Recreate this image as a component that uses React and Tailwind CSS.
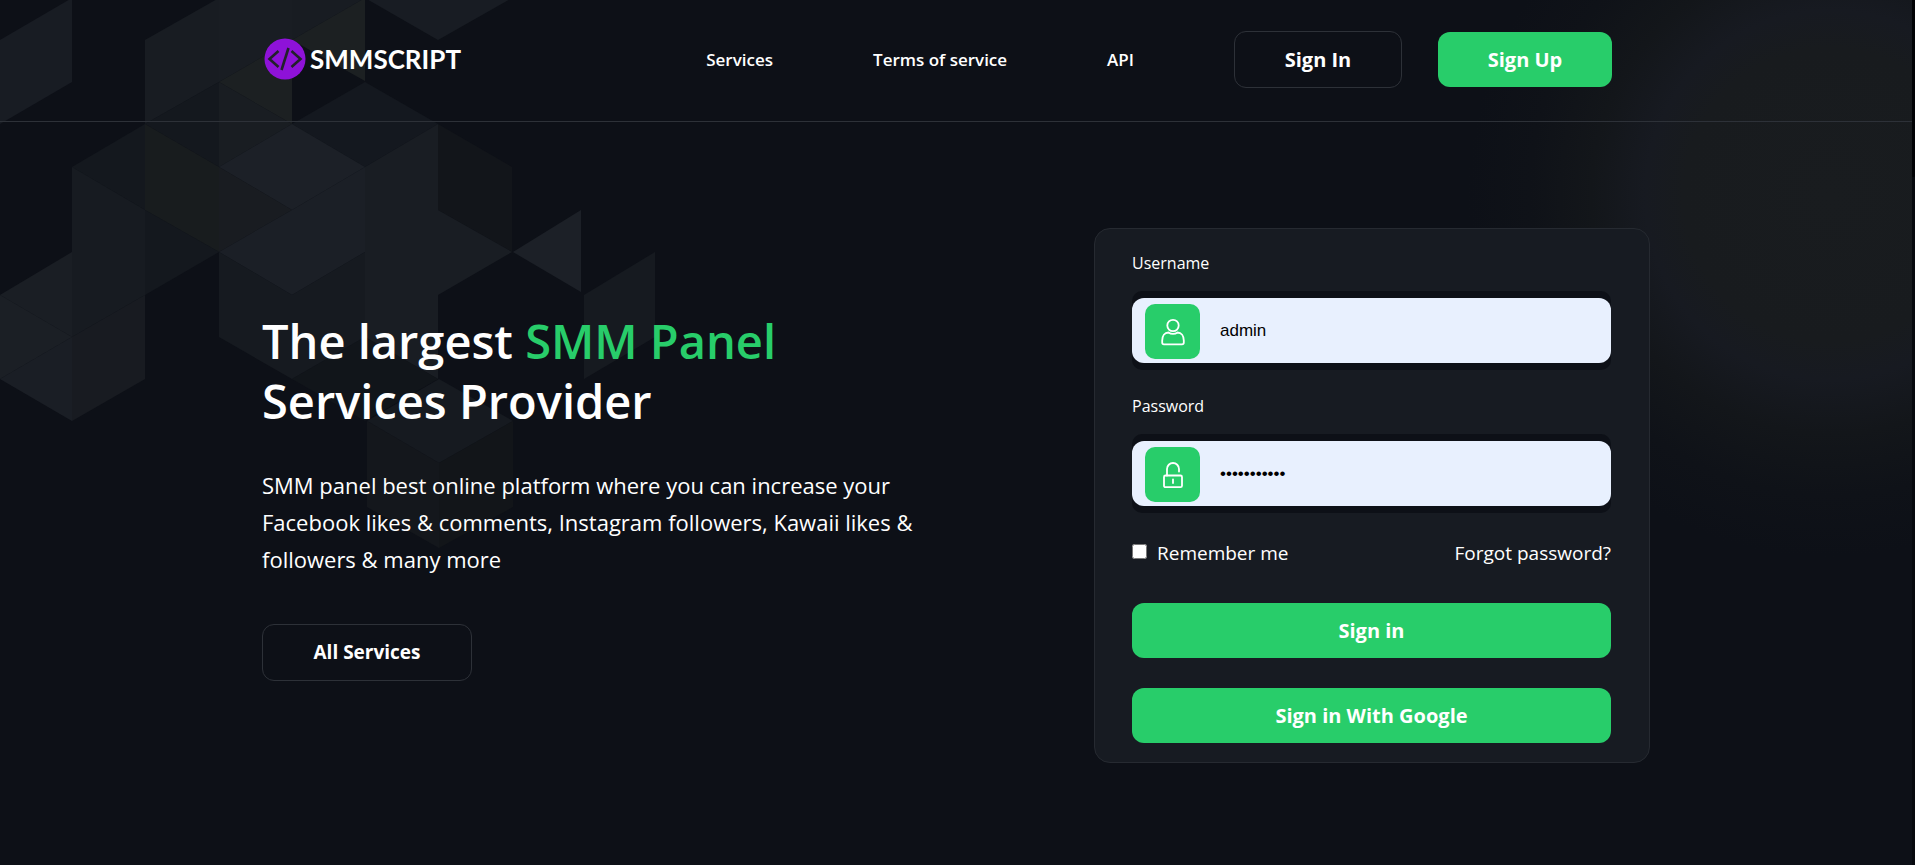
import { useState } from "react";

const CUBES = [
  ["0,40 72,-2 72,82 0,124", "#181c23"],
  ["145,40 219,-2 219,82 145,124", "#181c22"],
  ["219,-2 292,-2 292,40 219,82", "#191d23"],
  ["292,-2 365,-2 292,40", "#181c22"],
  ["292,40 365,-2 365,81", "#1c2022"],
  ["219,82 292,40 292,124", "#1c2022"],
  ["219,82 292,124 219,167", "#191d22"],
  ["219,82 219,167 145,124", "#14181e"],
  ["365,-2 512,-2 438,40", "#181c23"],
  ["292,124 365,82 438,124 365,167", "#14181f"],
  ["438,124 512,167 512,252 438,210", "#12151a"],
  ["365,167 438,124 438,210 512,252 438,295 438,379 365,337", "#191d23"],
  ["292,124 365,167 292,210 219,167", "#1c2027"],
  ["219,167 292,210 219,252", "#191c21"],
  ["145,124 219,167 219,252 145,210", "#181c1e"],
  ["292,210 365,167 365,252 292,295 219,252", "#1b1f26"],
  ["72,167 145,124 145,210", "#14181e"],
  ["72,167 145,210 145,295 72,337", "#171b21"],
  ["145,210 219,252 145,295", "#14181e"],
  ["0,295 72,252 72,337", "#1a1e24"],
  ["0,295 72,337 0,379", "#1b1f25"],
  ["0,379 72,337 72,421", "#1a1e25"],
  ["72,337 145,295 145,379 72,421", "#181b21"],
  ["219,252 292,295 365,252 365,337 292,379 219,337", "#161a20"],
  ["292,379 365,337 438,379 365,421", "#11151a"],
  ["367,421 439,379 513,421 439,463", "#161a20"],
  ["367,421 439,463 439,548 367,507", "#14171c"],
  ["439,463 513,421 513,507 439,548", "#121519"],
  ["513,252 581,210 581,292", "#1c2027"],
  ["584,295 655,252 655,337 584,379", "#161a20"],
];

function Backdrop() {
  return (
    <div aria-hidden="true" className="pointer-events-none absolute inset-0 overflow-hidden">
      <svg width="660" height="560" viewBox="0 0 660 560" className="block">
        {CUBES.map(([points, fill]) => (
          <polygon key={points} points={points} fill={fill} />
        ))}
      </svg>
      <div className="absolute -top-[190px] -right-[300px] h-[770px] w-[770px] rounded-full bg-[radial-gradient(closest-side,#191c1f_0%,#181b1e_38%,#171a21_48%,#13161a_62%,#0f1218_78%,#0d101700_94%)]" />
      <div className="absolute top-0 right-0 h-full w-[3px] bg-[#07090e]">
        <div className="h-[177px] rounded-b-full bg-[#010205]" />
      </div>
    </div>
  );
}

function Logo() {
  return (
    <a href="#" className="flex items-center gap-1 pb-[2px] pl-[2px]" aria-label="SMMSCRIPT">
      <svg width="42" height="42" viewBox="0 0 42 42" fill="none">
        <circle cx="21" cy="21" r="20.5" fill="#8e12d8" />
        <g stroke="#22202a" strokeWidth="2.6">
          <path d="M14.5 13 5.500 21l9 8" />
          <path d="M27.500 13 36.500 21l-9 8" />
          <path d="M24.500 10 17.500 32" />
        </g>
      </svg>
      <span className="font-[Lato,sans-serif] text-[26px] leading-8 font-bold text-white">SMMSCRIPT</span>
    </a>
  );
}

function UserIcon() {
  return (
    <svg width="24" height="28" viewBox="0 0 24 28" fill="none" stroke="#fff" strokeWidth="1.8" strokeLinejoin="round">
      <circle cx="12" cy="7.500" r="5.700" />
      <path d="M7.500 14.500C3.600 14.500 1.200 18 1.200 22.500v2c0 1.200.6 1.800 1.800 1.800h18c1.200 0 1.800-.6 1.800-1.800v-2c0-4.500-2.400-8-6.300-8-1.400 1-3 1.400-4.500 1.400s-3.100-.4-4.500-1.400z" />
    </svg>
  );
}

function LockIcon() {
  return (
    <svg width="24" height="28" viewBox="0 0 24 28" fill="none" stroke="#fff" strokeWidth="1.8" strokeLinecap="round">
      <rect x="3" y="14.500" width="18" height="11.700" rx="1.500" />
      <path d="M6 14.500V8a6 6 0 0 1 12 0v2.500" />
      <path d="M12 18.500v3.500" />
    </svg>
  );
}

function Field({ id, label, icon, ...input }) {
  return (
    <div>
      <label htmlFor={id} className="block text-base leading-6">{label}</label>
      <div className="relative mt-4 rounded-[10px] bg-[#0d1017] py-[7px]">
        <input
          id={id}
          className="block h-[65px] w-full rounded-xl bg-[#e8f0fe] pr-4 pl-[88px] font-[Liberation_Sans,Arial,sans-serif] text-[17px] text-black outline-none"
          {...input}
        />
        <span className="pointer-events-none absolute top-[13px] left-[13px] flex size-[55px] items-center justify-center rounded-[10px] bg-[#28cd6a]">
          {icon}
        </span>
      </div>
    </div>
  );
}

const GREEN = "flex h-[55px] items-center justify-center rounded-xl bg-[#28cd6a] text-xl font-bold text-white";
const OUTLINE = "flex h-[57px] items-center justify-center rounded-xl border border-[#2d3138] font-bold text-white";

export default function App() {
  const [username, setUsername] = useState("admin");
  const [password, setPassword] = useState("adminadmin1");
  const [remember, setRemember] = useState(false);

  return (
    <div className="relative min-h-screen bg-[#0d1017] pr-[3px] font-[Open_Sans,Noto_Sans,sans-serif] text-white">
      <Backdrop />
      <header className="relative border-b border-[#2d3138]">
        <div className="mx-auto flex h-[121px] max-w-[1388px] items-center justify-between pr-[38px] pb-[2px]">
          <Logo />
          <nav className="flex items-center text-[17px] font-semibold">
            <a href="#services" className="mr-[100px]">Services</a>
            <a href="#terms" className="mr-[100px]">Terms of service</a>
            <a href="#api" className="mr-[100px]">API</a>
            <a href="#signin" className={`${OUTLINE} mr-9 w-[168px] text-xl`}>Sign In</a>
            <a href="#signup" className={`${GREEN} w-[174px]`}>Sign Up</a>
          </nav>
        </div>
      </header>

      <main className="relative mx-auto flex max-w-[1388px] items-start justify-between pt-[106px] pb-20">
        <section className="max-w-[670px] pt-[83px]">
          <h1 className="text-[47px] leading-[60px] font-semibold">
            The largest <span className="text-[#28cd6a]">SMM Panel</span>
            <br />
            Services Provider
          </h1>
          <p className="mt-9 text-[22px] leading-[37px]">
            SMM panel best online platform where you can increase your Facebook likes &amp; comments, Instagram followers, Kawaii likes &amp; followers &amp; many more
          </p>
          <a href="#services" className={`${OUTLINE} mt-[46px] w-[210px] text-[19px]`}>All Services</a>
        </section>

        <form
          onSubmit={(e) => e.preventDefault()}
          className="w-[556px] rounded-2xl border border-[#262a31] bg-[#171b22] pt-[22px] pr-[38px] pb-[19px] pl-[37px]"
        >
          <div className="flex flex-col gap-6">
            <Field id="username" label="Username" icon={<UserIcon />} type="text" value={username} onChange={(e) => setUsername(e.target.value)} />
            <Field id="password" label="Password" icon={<LockIcon />} type="password" value={password} onChange={(e) => setPassword(e.target.value)} />
          </div>
          <div className="mt-[26px] flex items-center justify-between text-[19px] leading-7">
            <label className="flex items-center gap-[10px]">
              <input type="checkbox" checked={remember} onChange={(e) => setRemember(e.target.checked)} className="mb-1 size-[15px]" />
              Remember me
            </label>
            <a href="#forgot">Forgot password?</a>
          </div>
          <button type="submit" className={`${GREEN} mt-9 w-full`}>Sign in</button>
          <button type="button" className={`${GREEN} mt-[30px] w-full`}>Sign in With Google</button>
        </form>
      </main>
    </div>
  );
}
